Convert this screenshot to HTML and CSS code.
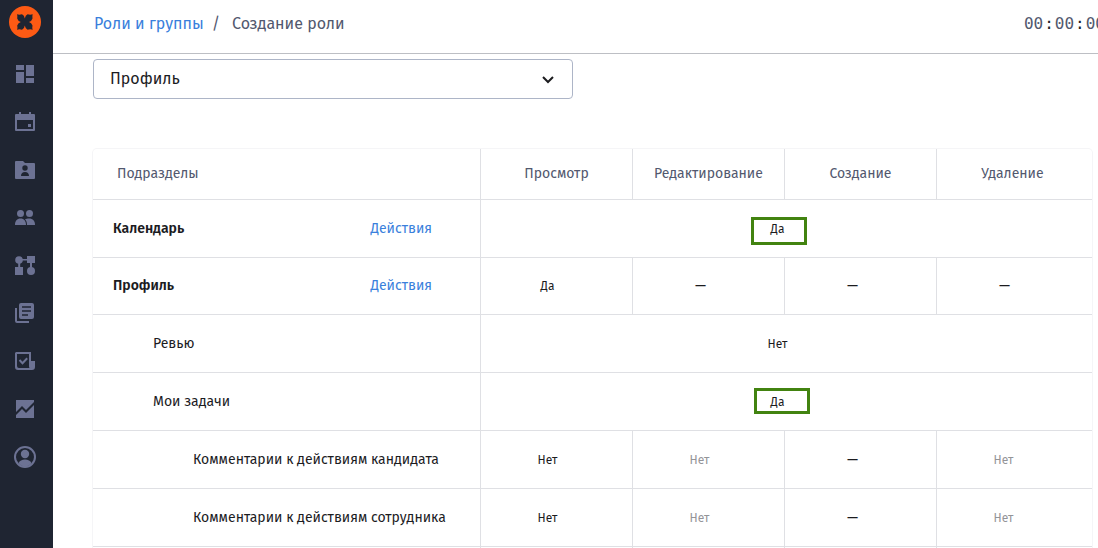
FILE: index.html
```html
<!DOCTYPE html>
<html lang="ru">
<head>
<meta charset="utf-8">
<meta name="viewport" content="width=device-width, initial-scale=1">
<title>Создание роли</title>
<link rel="stylesheet" href="styles.css">
</head>
<body>
<div class="app">
  <aside class="sidebar">
    <a class="logo" href="#" aria-label="На главную">
      <svg width="32" height="32" viewBox="0 0 32 32"><circle cx="16" cy="16" r="16" fill="#fd5a14"/><path fill="#1f2532" d="M8 8.200Q10 9 13 8.300Q15.300 9 15.800 12.500Q16.400 9 18.600 8.300Q21.500 9 23.700 8.200Q23 10.500 23.500 12.500Q22.500 15.500 20 16Q22.500 16.500 23.500 19.500Q23 21.500 23.700 23.800Q21.500 23 18.600 23.700Q16.400 23 15.800 19.500Q15.300 23 13 23.700Q10 23 8 23.800Q8.800 21.500 8.200 19.500Q9.200 16.500 11.800 16Q9.200 15.500 8.200 12.500Q8.800 10.500 8 8.200Z"/></svg>
    </a>
    <nav class="nav" aria-label="Главное меню">
      <a href="#" aria-label="Панель"><svg viewBox="0 0 24 24"><path d="M3 3h8v5H3zM3 10h8v11H3zM13 3h8v11h-8zM13 16h8v5h-8z"/></svg></a>
      <a href="#" aria-label="Календарь"><svg viewBox="0 0 24 24"><path fill-rule="evenodd" d="M6 2h2v2h8V2h2v2h3a1 1 0 0 1 1 1v15a1 1 0 0 1-1 1H3a1 1 0 0 1-1-1V5a1 1 0 0 1 1-1h3zM4 10v9h16v-9zM15 14h3v3h-3z"/></svg></a>
      <a href="#" aria-label="Личные дела"><svg viewBox="0 0 24 24"><path fill-rule="evenodd" d="M3 3h7l2 2h9a1 1 0 0 1 1 1v14a1 1 0 0 1-1 1H3a1 1 0 0 1-1-1V4a1 1 0 0 1 1-1zM12 7.300a2.700 2.700 0 1 0 0 5.400 2.700 2.700 0 0 0 0-5.400zM8 18h8c0-2.500-1.500-4-4-4s-4 1.500-4 4z"/></svg></a>
      <a href="#" aria-label="Сотрудники"><svg viewBox="0 0 24 24"><circle cx="7.500" cy="7.500" r="3.500"/><circle cx="16.500" cy="7.500" r="3.500"/><path d="M2 19c0-4 2-6.500 5.500-6.500S13 15 13 19zM14 19c0-2.500-.5-4.300-2-5.500 1-.7 2.500-1 4-1 4 0 6 2.500 6 6.500z"/></svg></a>
      <a href="#" aria-label="Процессы"><svg viewBox="0 0 24 24"><path d="M14 2h8v7h-8zM2 13h8v8H2zM6 5h9v1.400H6zM5.200 6h2v8h-2zM17 8h2v8h-2z"/><circle cx="6" cy="6" r="3.800"/><circle cx="18" cy="17" r="4"/></svg></a>
      <a href="#" aria-label="Документы"><svg viewBox="0 0 24 24"><path fill-rule="evenodd" d="M8 1h11a2 2 0 0 1 2 2v12a2 2 0 0 1-2 2H8a2 2 0 0 1-2-2V3a2 2 0 0 1 2-2zM9 4.200v1.600h9V4.200zM9 8.200v1.600h9V8.200zM9 12.200v1.600h6v-1.600z"/><path d="M2 6h2v13h12v2H4a2 2 0 0 1-2-2z"/></svg></a>
      <a href="#" aria-label="Задачи"><svg viewBox="0 0 24 24"><path fill-rule="evenodd" d="M3 2h15v9h4v6a3 3 0 0 1-3 3H5a3 3 0 0 1-3-3V3zM4 4v12a2 2 0 0 0 2 2h10.500a3 3 0 0 1-.5-2V4z"/><path class="line" d="M6.500 10l3 3.200 4.700-5"/></svg></a>
      <a href="#" aria-label="Аналитика"><svg viewBox="0 0 24 24"><path d="M3 2h18v2l-8 8-4-4-6 6zM3 17l6-6 4 4 8-8v13H3z"/></svg></a>
      <a href="#" aria-label="Профиль"><svg viewBox="0 0 24 24"><circle class="line" cx="12" cy="11" r="10"/><circle cx="12" cy="8" r="4.200"/><path d="M5.500 17c1-2 3.500-3.500 6.500-3.500s5.500 1.500 6.500 3.500c-1.500 2-4 3.500-6.500 3.500S7 19 5.500 17z"/></svg></a>
    </nav>
  </aside>

  <div class="page">
    <header class="topbar">
      <nav class="crumbs" aria-label="Навигация">
        <a href="#">Роли и группы</a><span class="slash">/</span><span>Создание роли</span>
      </nav>
      <div class="timer">00<b>:</b>00<b>:</b>00</div>
    </header>

    <main class="content">
      <div class="picker">
        <select aria-label="Раздел"><option>Профиль</option></select>
        <svg class="chevron" width="14" height="10" viewBox="0 0 14 10"><path d="M2 2l5 5 5-5" fill="none" stroke="#1c1c1f" stroke-width="2"/></svg>
      </div>

      <div class="card">
        <table class="rights">
          <colgroup><col class="c-name"><col class="c-right"><col class="c-right"><col class="c-right"><col></colgroup>
          <thead>
            <tr><th scope="col">Подразделы</th><th scope="col">Просмотр</th><th scope="col">Редактирование</th><th scope="col">Создание</th><th scope="col">Удаление</th></tr>
          </thead>
          <tbody>
            <tr class="section"><th scope="row"><div class="name">Календарь<a href="#">Действия</a></div></th><td colspan="4"><span class="value">Да<i class="mark"></i></span></td></tr>
            <tr class="section group"><th scope="row"><div class="name">Профиль<a href="#">Действия</a></div></th><td>Да</td><td class="dash">—</td><td class="dash">—</td><td class="dash">—</td></tr>
            <tr class="level-2"><th scope="row">Ревью</th><td colspan="4">Нет</td></tr>
            <tr class="level-2"><th scope="row">Мои задачи</th><td colspan="4"><span class="value">Да<i class="mark mark-low"></i></span></td></tr>
            <tr class="level-3"><th scope="row">Комментарии к действиям кандидата</th><td>Нет</td><td class="off">Нет</td><td class="dash">—</td><td class="off">Нет</td></tr>
            <tr class="level-3"><th scope="row">Комментарии к действиям сотрудника</th><td>Нет</td><td class="off">Нет</td><td class="dash">—</td><td class="off">Нет</td></tr>
            <tr class="level-3"><th scope="row"></th><td></td><td></td><td></td><td></td></tr>
          </tbody>
        </table>
      </div>
    </main>
  </div>
</div>
</body>
</html>
```
FILE: styles.css
```css
* { box-sizing: border-box; }

body {
  margin: 0;
  background: #fff;
  color: #1c1c1f;
  font: 14px/20px "Fira Sans", "Noto Sans", sans-serif;
}

a { color: #3a7fdc; text-decoration: none; }

.app { display: flex; height: 100vh; overflow: hidden; }

.sidebar {
  flex: none;
  display: flex;
  flex-direction: column;
  align-items: center;
  gap: 24px;
  width: 53px;
  padding: 6px 3px 0 0;
  background: #1f2532;
}
.logo { display: block; height: 32px; }
.nav { display: flex; flex-direction: column; gap: 24px; }
.nav a { display: block; height: 24px; }
.nav svg { display: block; width: 24px; height: 24px; fill: #6c7293; }
.nav .line { fill: none; stroke: #6c7293; stroke-width: 2; }

.page { flex: 1; min-width: 0; }

.topbar {
  display: flex;
  align-items: center;
  justify-content: space-between;
  height: 54px;
  padding: 0 0 6px 41px;
  border-bottom: 1px solid #bdbfc4;
  color: #52586e;
  font-size: 16px;
  white-space: nowrap;
}
.slash { margin: 0 12px 0 8px; }
.timer {
  margin-right: -7px;
  font-family: "DejaVu Sans Mono", monospace;
}
.timer b { padding: 0 1px; color: #1c1c1f; font-weight: 400; }

.content { padding: 5px 6px 0 40px; }

.picker { position: relative; max-width: 480px; margin-bottom: 50px; }
.picker select {
  display: block;
  width: 100%;
  height: 40px;
  padding: 0 40px 0 16px;
  border: 1px solid #adb5c7;
  border-radius: 4px;
  background: #fff;
  color: inherit;
  font: inherit;
  font-size: 16px;
  appearance: none;
}
.chevron { position: absolute; top: 16px; right: 18px; pointer-events: none; }

.card { border-radius: 4px; box-shadow: 0 0 0 1px #f5f5f7; }

.rights { width: 100%; table-layout: fixed; border-collapse: separate; border-spacing: 0; }
.c-name { width: 387px; }
.c-right { width: 152px; }
.rights th, .rights td { border-bottom: 1px solid #dfe0e4; }
.rights tr > * + * { border-left: 1px solid #dfe0e4; }

.rights thead th {
  height: 51px;
  padding: 0;
  color: #52586e;
  font-weight: 400;
  text-align: center;
}
.rights thead th:first-child { padding-left: 24px; text-align: left; }
.rights thead th:last-child { padding-right: 4px; }

.rights tbody th {
  height: 58px;
  padding: 0 0 0 20px;
  font-weight: 400;
  text-align: left;
  white-space: nowrap;
}
.rights tbody td { padding: 0 18px 0 0; font-size: 12px; text-align: center; }
.rights .section th { font-weight: 600; }
.rights .group th { height: 57px; }
.rights .level-2 th { padding-left: 60px; }
.rights .level-3 th { padding-left: 100px; }
.rights .off { color: #949498; }
.rights tbody .off:last-child { padding-right: 22px; }
.rights tbody .dash { padding: 0 16px 0 0; font-size: 14px; }
.rights tbody .dash:last-child { padding-right: 20px; }

.name { display: flex; justify-content: space-between; padding-right: 48px; }
.name a { font-weight: 400; }

.value { position: relative; }
.mark {
  position: absolute;
  top: -5px;
  left: -20px;
  width: 56px;
  height: 28px;
  border: 3px solid #428310;
}
.mark-low { top: -7px; left: -17px; height: 26px; }
```
